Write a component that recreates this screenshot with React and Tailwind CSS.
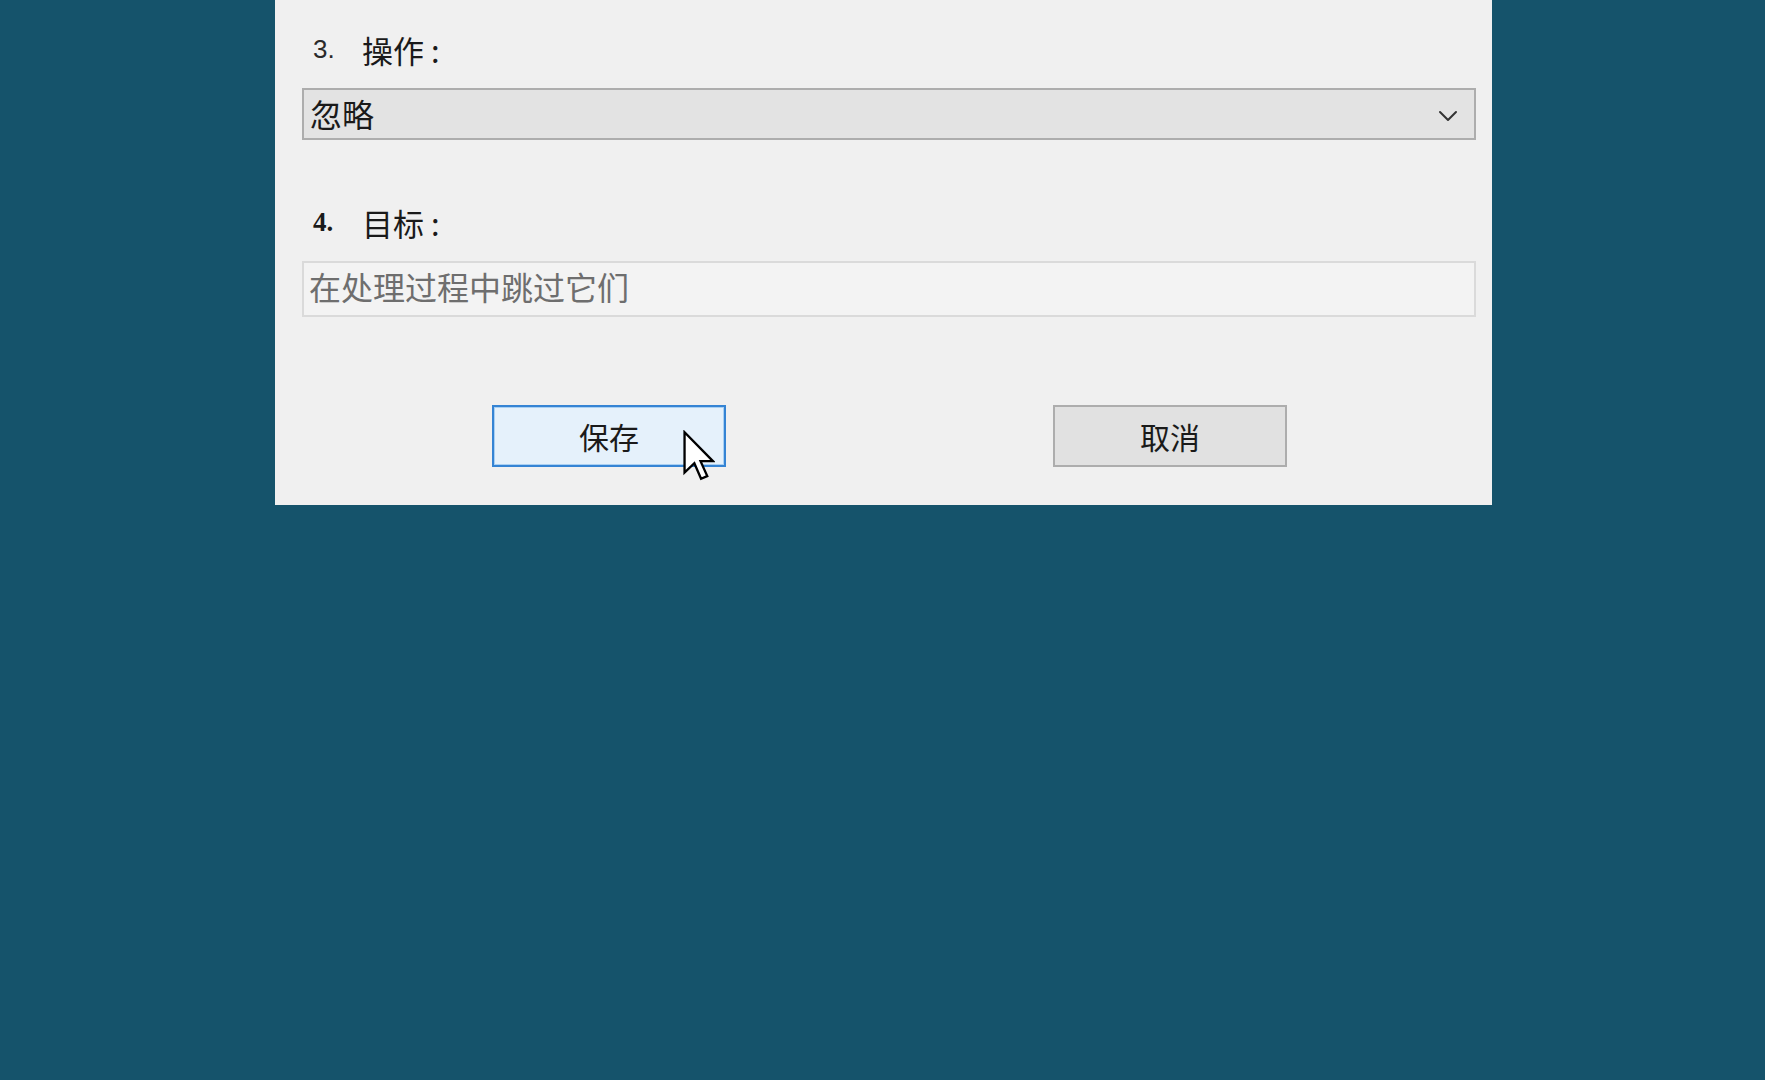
import { ChevronDown } from "lucide-react";

const cjk = { fontFamily: '"Noto Sans CJK SC", "Liberation Sans", sans-serif' };

const Cursor = () => (
  <svg
    width="32"
    height="52"
    viewBox="0 0 12.4 19.6"
    className="absolute left-[191px] top-[25px]"
  >
    <path
      d="M0.6 0.6 L0.6 16.2 L4.4 12.6 L7 18.6 L9.4 17.6 L6.8 11.8 L11.6 11.8 Z"
      fill="#ffffff"
      stroke="#000000"
      strokeWidth="0.9"
      strokeLinejoin="miter"
    />
  </svg>
);

export default function App() {
  return (
    <main
      className="flex h-[1080px] w-full bg-[#15536b] text-[#1a1a1a]"
      style={cjk}
    >
      <section className="ml-[275px] flex h-[505px] w-[1217px] flex-col bg-[#f0f0f0] pl-[27px] pr-[16px] pt-[33px]">
        <div className="flex h-[32px] items-center pl-[11px] text-[31px] leading-none">
          <span className="w-[49px] font-['Liberation_Sans'] text-[26px] text-[#2a2a2a]">
            3.
          </span>
          <span>操作 :</span>
        </div>
        <div className="mt-[23px] flex h-[52px] items-center justify-between border-2 border-[#adadad] bg-[#e3e3e3] pl-[6px] pr-[8px] text-[32px] leading-none">
          <span className="pb-[3px]">忽略</span>
          <ChevronDown className="mt-[3px] h-[32px] w-[36px] text-[#333]" strokeWidth={1.5} />
        </div>
        <div className="mt-[66px] flex h-[32px] items-center pl-[11px] text-[31px] leading-none">
          <span className="w-[49px] font-['Liberation_Serif'] text-[27px] font-bold text-[#1a1a1a]">
            4.
          </span>
          <span>目标 :</span>
        </div>
        <div className="mt-[23px] flex h-[56px] items-center border-2 border-[#dadada] bg-[#f3f3f3] pb-[7px] pl-[5px] text-[32px] leading-none text-[#6e6e6e]">
          在处理过程中跳过它们
        </div>
        <div className="mt-[88px] flex pl-[190px]">
          <div className="relative">
            <button className="flex h-[62px] w-[234px] items-center justify-center border-2 border-[#3584d4] bg-[#e5f1fb] text-[30px] leading-none text-[#1a1a1a] shadow-[inset_0_0_0_1px_#a9d0f3]">
              保存
            </button>
            <Cursor />
          </div>
          <button className="ml-[327px] flex h-[62px] w-[234px] items-center justify-center border-2 border-[#adadad] bg-[#e1e1e1] text-[30px] leading-none text-[#1a1a1a]">
            取消
          </button>
        </div>
      </section>
    </main>
  );
}
